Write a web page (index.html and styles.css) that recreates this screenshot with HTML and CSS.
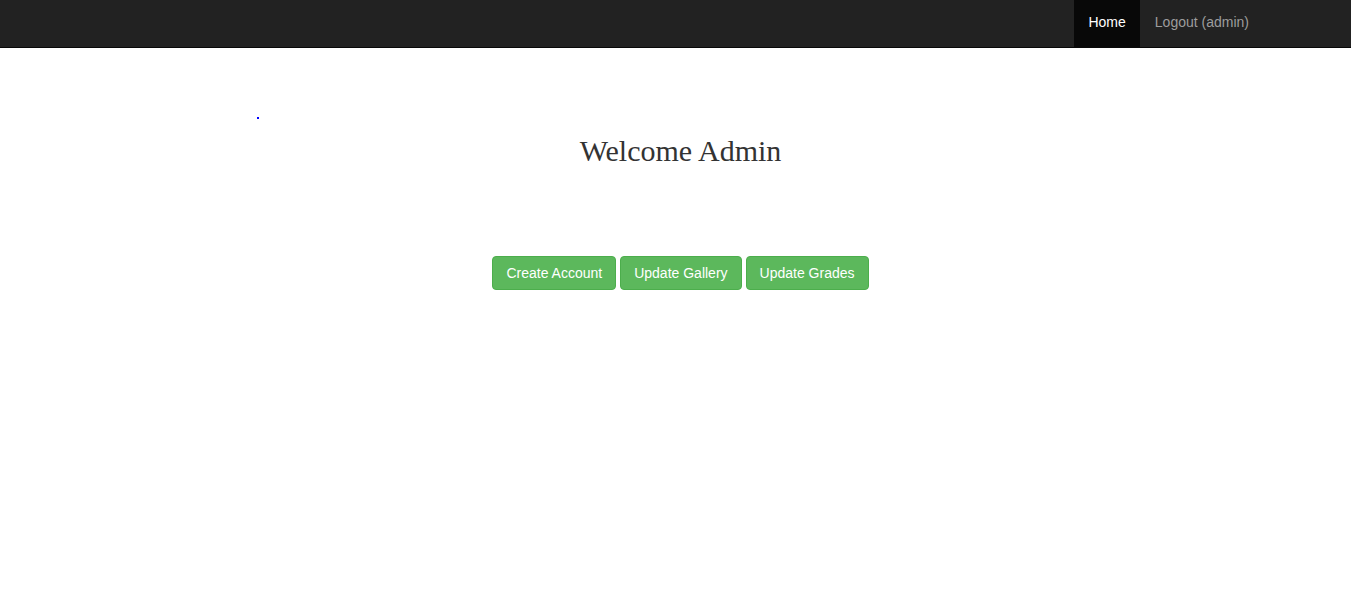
FILE: index.html
```html
<!DOCTYPE html>
<html>
<head>
<meta charset="utf-8">
<link rel="stylesheet" href="styles.css">
</head>
<body>
<nav class="navbar">
  <ul class="nav">
    <li class="nav-item active"><a href="#">Home</a></li>
    <li class="nav-item"><a href="#">Logout (admin)</a></li>
  </ul>
</nav>
<main class="content">
  <div class="dot-row"><span class="dot"></span></div>
  <h1 class="welcome">Welcome Admin</h1>
  <div class="actions">
    <button class="btn">Create Account</button>
    <button class="btn">Update Gallery</button>
    <button class="btn">Update Grades</button>
  </div>
</main>
</body>
</html>
```

FILE: styles.css
```css
html, body {
  margin: 0;
  padding: 0;
  background: #fff;
}
body {
  font-family: "Liberation Sans", Arial, sans-serif;
  font-size: 14px;
  color: #333;
}
.navbar {
  background: #222;
  border-bottom: 1px solid #080808;
  height: 47px;
  display: flex;
  justify-content: flex-end;
  padding-right: 87px;
}
.nav {
  list-style: none;
  margin: 0;
  padding: 0;
  display: flex;
}
.nav-item a {
  display: block;
  height: 47px;
  line-height: 45px;
  padding: 0 15px;
  color: #9d9d9d;
  text-decoration: none;
}
.nav-item.active a {
  background: #080808;
  color: #fff;
  padding: 0 14px;
}
.content {
  display: flex;
  flex-direction: column;
  align-items: center;
  padding-left: 10px;
}
.dot-row {
  align-self: stretch;
  padding: 69px 0 0 247px;
  height: 2px;
}
.dot {
  display: block;
  width: 2px;
  height: 2px;
  background: #0000ff;
}
.welcome {
  font-family: "Liberation Serif", "Times New Roman", serif;
  font-weight: normal;
  font-size: 30px;
  line-height: 33px;
  margin: 15px 0 0;
  color: #333;
}
.actions {
  margin-top: 89px;
  display: flex;
  gap: 4px;
}
.btn {
  font-family: "Liberation Sans", Arial, sans-serif;
  font-size: 14px;
  line-height: 20px;
  padding: 6px 13px;
  background: #5cb85c;
  border: 1px solid #4cae4c;
  border-radius: 4px;
  color: #fff;
  cursor: pointer;
}
```
